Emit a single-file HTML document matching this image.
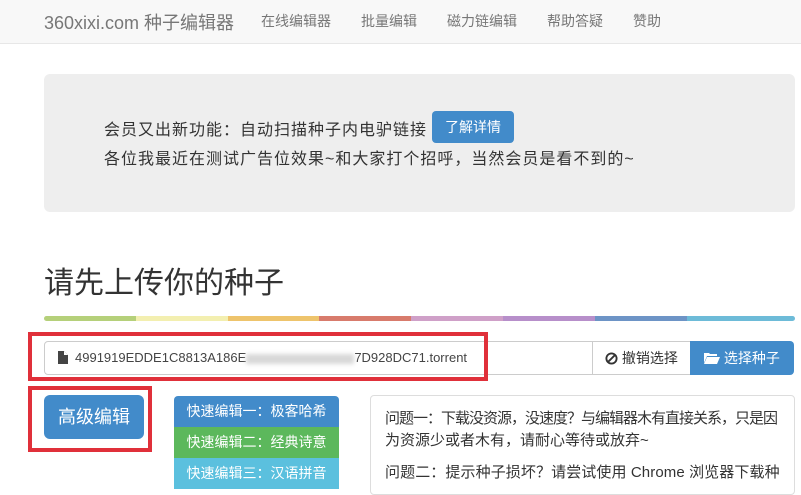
<!DOCTYPE html>
<html><head><meta charset="utf-8">
<style>
*{box-sizing:border-box;margin:0;padding:0}
body{width:801px;height:481px;overflow:hidden;background:#fff;font-family:"Liberation Sans","Noto Sans CJK SC",sans-serif;color:#333;position:relative}
.nav{position:absolute;left:0;top:0;width:801px;height:44px;background:#f8f8f8;border-bottom:1px solid #e7e7e7}
.nav span{position:absolute;top:11px;font-size:14px;color:#777}
.brand{font-size:18px!important;top:9px!important;left:44px}
.jumbo{position:absolute;left:44px;top:74px;width:751px;height:138px;background:#eee;border-radius:6px}
.jt{position:absolute;left:104px;font-size:16px;letter-spacing:1px;color:#333}
.btnb{background:#428bca;color:#fff;border-radius:4px}
h1{position:absolute;left:44px;top:258px;font-size:30px;font-weight:normal;color:#333}
.stripe{position:absolute;top:316px;height:5px}
.abs{position:absolute}
</style></head><body>
<div class="nav">
<span class="brand">360xixi.com 种子编辑器</span>
<span style="left:261px">在线编辑器</span>
<span style="left:361px">批量编辑</span>
<span style="left:447px">磁力链编辑</span>
<span style="left:547px">帮助答疑</span>
<span style="left:633px">赞助</span>
</div>
<div class="jumbo"></div>
<div class="jt" style="top:116px">会员又出新功能：自动扫描种子内电驴链接</div>
<div class="abs btnb" style="left:432px;top:111px;width:82px;height:32px;font-size:14px;line-height:32px;text-align:center">了解详情</div>
<div class="jt" style="top:145px">各位我最近在测试广告位效果~和大家打个招呼，当然会员是看不到的~</div>
<h1>请先上传你的种子</h1>
<div class="stripe" style="left:44px;width:92px;background:#b5d07a;border-radius:3px 0 0 3px"></div>
<div class="stripe" style="left:136px;width:92px;background:#f3efb0"></div>
<div class="stripe" style="left:228px;width:91px;background:#eec46c"></div>
<div class="stripe" style="left:319px;width:92px;background:#d87b6c"></div>
<div class="stripe" style="left:411px;width:92px;background:#cfa0c8"></div>
<div class="stripe" style="left:503px;width:92px;background:#b78fca"></div>
<div class="stripe" style="left:595px;width:92px;background:#6d94c6"></div>
<div class="stripe" style="left:687px;width:108px;background:#6dbbd8;border-radius:0 3px 3px 0"></div>

<div class="abs" style="left:44px;top:341px;width:549px;height:34px;border:1px solid #ccc;border-radius:4px 0 0 4px"></div>
<svg class="abs" style="left:58px;top:351px" width="10" height="13" viewBox="0 0 10 13"><path d="M0 0H6L10 4V13H0Z" fill="#444"/><path d="M6 0V4H10" fill="#fff"/></svg>
<div class="abs" style="left:75px;top:350px;font-size:13px;color:#444;white-space:nowrap">4991919EDDE1C8813A186E<span style="display:inline-block;width:108px;height:10px;background:#d8d8d8;filter:blur(2px);vertical-align:middle"></span>7D928DC71.torrent</div>
<div class="abs" style="left:592px;top:341px;width:99px;height:34px;border:1px solid #ccc;background:#fff;font-size:14px;line-height:32px;text-align:center;color:#333">
<svg width="13" height="13" viewBox="0 0 14 14" style="vertical-align:-2px"><circle cx="7" cy="7" r="5.5" fill="none" stroke="#333" stroke-width="2"/><path d="M3 11L11 3" stroke="#333" stroke-width="2"/></svg> 撤销选择</div>
<div class="abs btnb" style="left:690px;top:341px;width:104px;height:34px;border-radius:0 4px 4px 0;font-size:14px;line-height:34px;text-align:center">
<svg width="16" height="12" viewBox="0 0 16 12" style="vertical-align:-1px"><path d="M0 1H5L6 2H13V4H3L0 11Z" fill="#fff"/><path d="M3 5H16L13 12H0Z" fill="#fff"/></svg> 选择种子</div>
<div class="abs" style="left:28px;top:332px;width:460px;height:49px;border:4px solid #e0303a"></div>

<div class="abs btnb" style="left:44px;top:395px;width:100px;height:44px;border-radius:6px;font-size:18px;line-height:44px;text-align:center">高级编辑</div>
<div class="abs" style="left:28px;top:386px;width:124px;height:66px;border:4px solid #e0303a"></div>

<div class="abs" style="left:174px;top:396px;width:165px;height:31px;background:#428bca;border-radius:4px 4px 0 0;color:#fff;font-size:14px;line-height:31px;text-align:center">快速编辑一：极客哈希</div>
<div class="abs" style="left:174px;top:427px;width:165px;height:31px;background:#5cb85c;color:#fff;font-size:14px;line-height:31px;text-align:center">快速编辑二：经典诗意</div>
<div class="abs" style="left:174px;top:458px;width:165px;height:31px;background:#5bc0de;color:#fff;font-size:14px;line-height:31px;text-align:center">快速编辑三：汉语拼音</div>

<div class="abs" style="left:370px;top:395px;width:425px;height:100px;border:1px solid #ddd;border-radius:4px"></div>
<div class="abs" style="left:385px;top:408px;font-size:15px;line-height:22px;color:#333;white-space:nowrap"><span style="letter-spacing:-1px">问题一：下载没资源，没速度？与编辑器木有直接关系，只是因</span><br>为资源少或者木有，请耐心等待或放弃~</div>
<div class="abs" style="left:385px;top:461px;font-size:15px;letter-spacing:0.1px;color:#333;white-space:nowrap">问题二：提示种子损坏？请尝试使用 Chrome 浏览器下载种</div>
</body></html>
